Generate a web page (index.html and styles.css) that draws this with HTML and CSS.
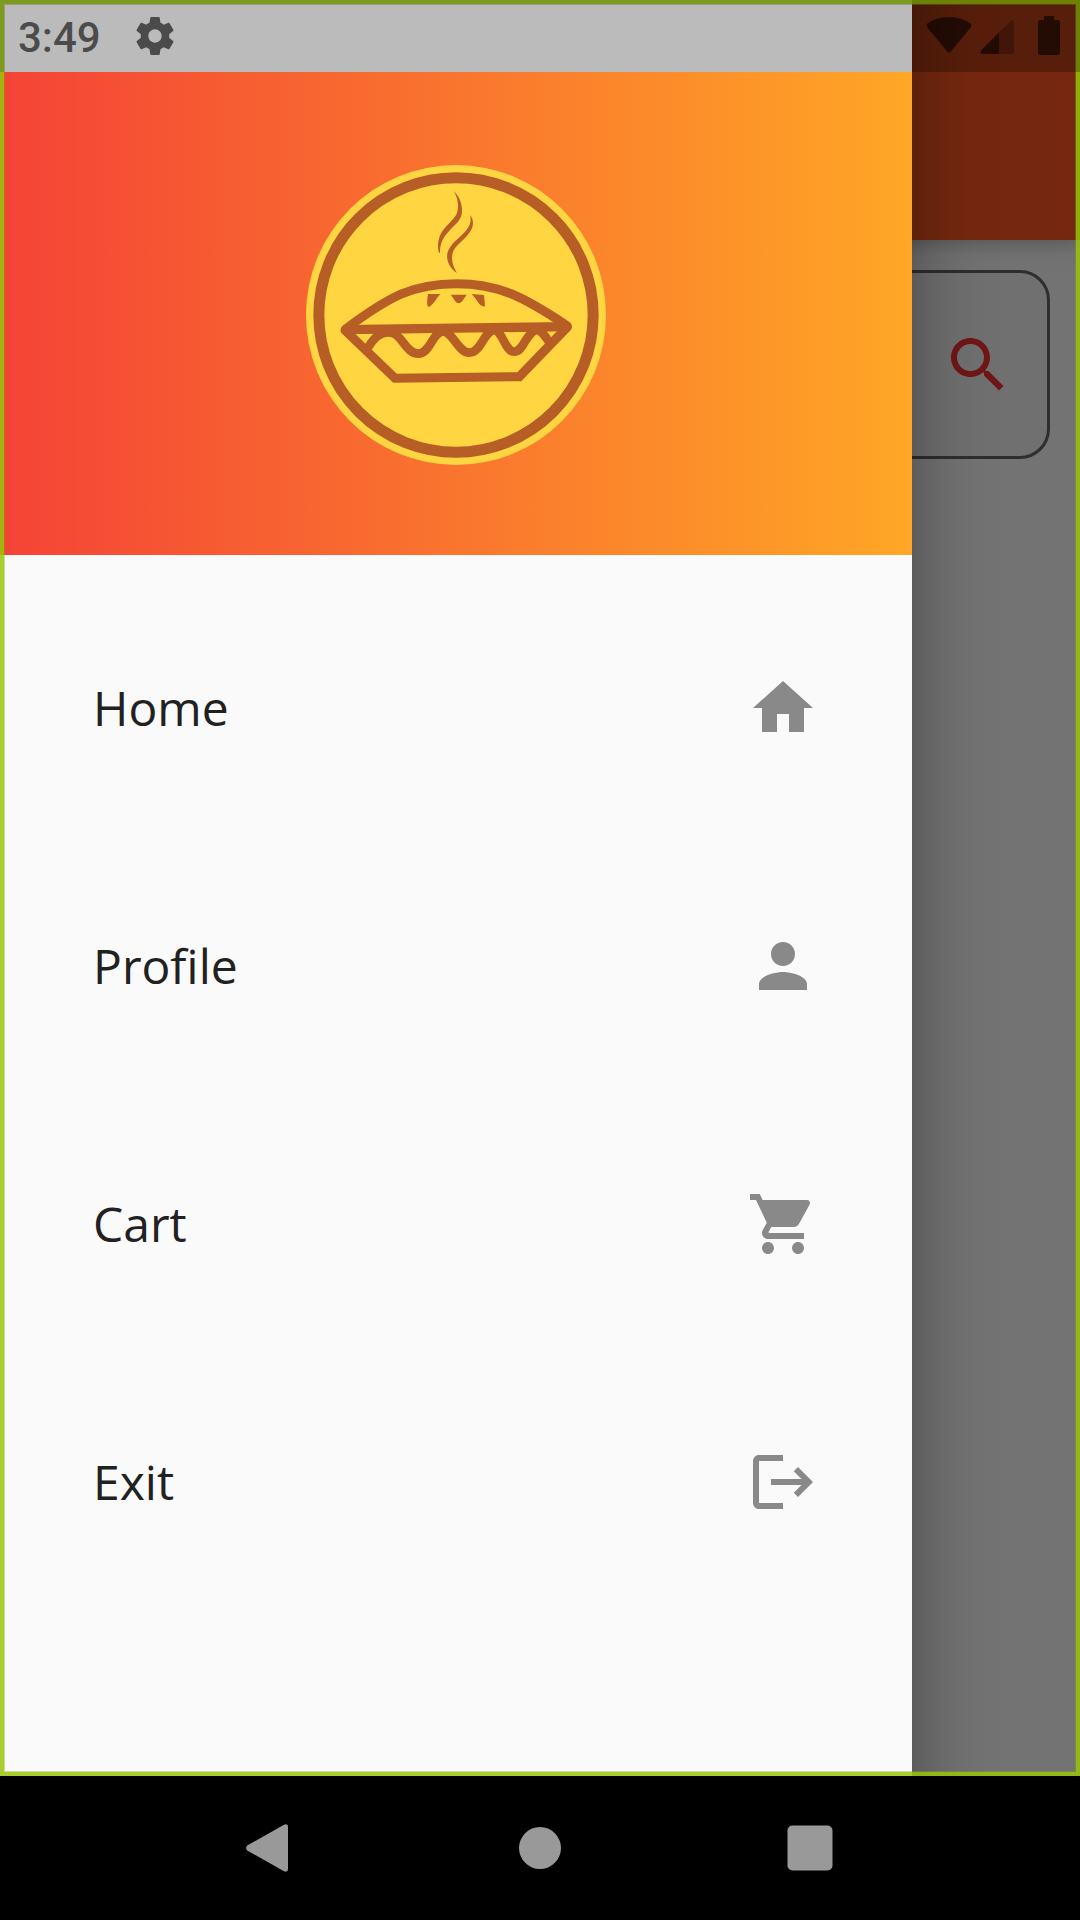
FILE: index.html
```
<!DOCTYPE html>
<html lang="en">
<head>
<meta charset="utf-8">
<title>Menu</title>
<link rel="stylesheet" href="styles.css">
</head>
<body>
<div class="phone">
  <div class="stage">
    <main class="page">
      <header class="app-bar"></header>
      <div class="search-field">
        <svg class="search-icon" viewBox="0 0 24 24"><path d="M15.5 14h-.79l-.28-.27C15.41 12.59 16 11.11 16 9.5 16 5.91 13.09 3 9.5 3S3 5.91 3 9.5 5.91 16 9.5 16c1.61 0 3.09-.59 4.23-1.57l.27.28v.79l5 4.99L20.49 19l-4.99-5zm-6 0C7.01 14 5 11.99 5 9.5S7.01 5 9.5 5 14 7.01 14 9.5 11.99 14 9.5 14z"/></svg>
      </div>
    </main>
    <div class="scrim"></div>
    <aside class="drawer">
      <div class="drawer-header">
        <svg class="logo" viewBox="48 45 900 900">
          <circle class="logo-disc" cx="498" cy="495" r="450"/>
          <circle class="logo-line" cx="498" cy="495" r="411.5" stroke-width="33"/>
          <path class="logo-fill" d="M491 123C507 139 517 158 516 187C514 210 497 223 478 242C459 262 450 279 450 308L447 308C441 288 444 262 458 242C473 222 494 207 501 189C508 168 503 142 491 123Z"/>
          <path class="logo-fill" d="M541 195C551 209 551 226 543 241C531 263 510 276 497 292C480 313 484 344 501 369C481 356 468 335 472 310C478 281 513 261 530 239C543 223 543 210 541 195Z"/>
          <path class="logo-line" stroke-width="27" d="M167 537C300 438 370 401 500 401C625 401 700 440 831 527"/>
          <path class="logo-line" stroke-width="28" d="M167 539L831 530"/>
          <path class="logo-line logo-miter" stroke-width="27" d="M165 541L315 685L688 680L832 531"/>
          <path class="logo-line" stroke-width="26" d="M236 590C258 552 284 542 308 549C336 556 349 611 385 611C420 611 425 551 458 543C490 547 504 608 538 608C574 608 580 546 612 540C638 542 645 605 672 605C701 605 705 553 738 539C754 540 763 556 774 571"/>
          <path class="logo-fill" d="M414 432L451 432C438 445 432 464 416 471C409 466 412 446 414 432ZM482 434L530 434C522 445 516 459 506 460C496 459 491 444 482 434ZM545 432L582 435L585 469C568 472 563 450 545 432Z"/>
        </svg>
      </div>
      <nav class="menu">
        <a class="menu-item"><span class="menu-label">Home</span>
          <svg class="menu-icon" viewBox="0 0 24 24"><path d="M10 20v-6h4v6h5v-8h3L12 3 2 12h3v8z"/></svg></a>
        <a class="menu-item"><span class="menu-label">Profile</span>
          <svg class="menu-icon" viewBox="0 0 24 24"><path d="M12 12c2.21 0 4-1.79 4-4s-1.79-4-4-4-4 1.79-4 4 1.790 4 4 4zm0 2c-2.670 0-8 1.340-8 4v2h16v-2c0-2.660-5.330-4-8-4z"/></svg></a>
        <a class="menu-item"><span class="menu-label">Cart</span>
          <svg class="menu-icon" viewBox="0 0 24 24"><path d="M7 18c-1.100 0-1.990.9-1.990 2S5.900 22 7 22s2-.9 2-2-.9-2-2-2zM1 2v2h2l3.600 7.590-1.350 2.450c-.16.28-.25.61-.25.96 0 1.100.9 2 2 2h12v-2H7.420c-.14 0-.25-.11-.25-.25l.03-.12.9-1.630h7.450c.75 0 1.410-.41 1.750-1.030l3.580-6.490c.08-.14.12-.31.12-.48 0-.55-.45-1-1-1H5.210l-.94-2H1zm16 16c-1.100 0-1.990.9-1.990 2s.89 2 1.990 2 2-.9 2-2-.9-2-2-2z"/></svg></a>
        <a class="menu-item"><span class="menu-label">Exit</span>
          <svg class="menu-icon" viewBox="0 0 24 24"><path d="M17 7l-1.410 1.410L18.170 11H8v2h10.170l-2.580 2.580L17 17l5-5zM4 5h8V3H4c-1.100 0-2 .9-2 2v14c0 1.100.9 2 2 2h8v-2H4V5z"/></svg></a>
      </nav>
    </aside>
    <div class="focus-frame"></div>
    <div class="status-bar">
      <span class="clock">3:49</span>
      <svg class="gear" viewBox="2 2 20 20"><path d="M19.430 12.980c.04-.32.07-.64.07-.98s-.03-.66-.07-.98l2.110-1.650c.19-.15.24-.42.12-.64l-2-3.460c-.12-.22-.39-.3-.61-.22l-2.490 1c-.52-.4-1.080-.73-1.690-.98l-.38-2.650C14.460 2.180 14.250 2 14 2h-4c-.25 0-.46.18-.49.42l-.38 2.650c-.61.25-1.170.59-1.690.98l-2.490-1c-.23-.09-.49 0-.61.22l-2 3.460c-.13.22-.07.49.12.64l2.110 1.650c-.04.32-.07.65-.07.98s.03.66.07.98l-2.110 1.650c-.19.15-.24.42-.12.64l2 3.460c.12.22.39.3.61.22l2.490-1c.52.4 1.080.73 1.690.98l.38 2.650c.03.24.24.42.49.42h4c.25 0 .46-.18.49-.42l.38-2.650c.61-.25 1.170-.59 1.690-.98l2.490 1c.23.09.49 0 .61-.22l2-3.460c.12-.22.07-.49-.12-.64l-2.110-1.650zM12 15.500c-1.930 0-3.500-1.570-3.500-3.500s1.570-3.500 3.500-3.500 3.500 1.570 3.500 3.500-1.570 3.500-3.500 3.500z"/></svg>
      <svg class="signals" viewBox="0 0 136 40">
        <path d="M.6 8Q10 1 23 1Q36 1 45.400 8L45 11L24.500 36Q23 37.600 21.500 36L1 11Z"/>
        <path d="M73 16.500V38H56.500Q53 37 55 34.500Z"/>
        <path class="signal-empty" d="M73 16.500L85 4.500Q88 3 88 6V36Q88 38 86 38H73Z"/>
        <path d="M118 0H128V4H132Q134 4 134 6V37Q134 39 132 39H114Q112 39 112 37V6Q112 4 114 4H118Z"/>
      </svg>
    </div>
  </div>
  <footer class="nav-bar">
    <svg class="nav-icon" viewBox="0 0 48 48"><path d="M1.200 21.500L38 .7Q42 -.8 42 3V45Q42 48.800 38 47.300L1.200 26.500Q-1 24 1.200 21.500Z"/></svg>
    <svg class="nav-icon" viewBox="0 0 48 48"><circle cx="24" cy="24" r="21"/></svg>
    <svg class="nav-icon" viewBox="0 0 48 48"><rect x="1.500" y="1.500" width="45" height="45" rx="5"/></svg>
  </footer>
</div>
</body>
</html>
```

FILE: styles.css
```
* { box-sizing: border-box; }
body { margin: 0; background: #000; }
svg { display: block; flex: none; }

.phone { width: 1080px; height: 1920px; display: flex; flex-direction: column; overflow: hidden; }
.stage { position: relative; height: 1776px; overflow: hidden; }

/* screen behind the drawer */
.page { height: 100%; background: #fafafa; }
.app-bar { height: 240px; background: #ff5722; box-shadow: 0 6px 12px rgba(0, 0, 0, .12), 0 3px 30px rgba(0, 0, 0, .12); }
.search-field { margin: 30px 30px 0; height: 189px; padding: 0 33px; display: flex; align-items: center; justify-content: flex-end; background: #f4f4f4; border: 3px solid #646464; border-radius: 30px; }
.search-icon { width: 72px; height: 72px; fill: #f73034; }
.scrim { position: absolute; inset: 0; background: rgba(0, 0, 0, .54); }

/* drawer: runs past both ends of the stage so its shadow stays even */
.drawer { position: absolute; top: -80px; bottom: -80px; left: 0; width: 912px; padding-top: 152px; background: #fafafa; box-shadow: 0 0 72px rgba(0, 0, 0, .38); }
.drawer-header { height: 483px; padding-top: 93px; display: flex; justify-content: center; align-items: flex-start; background: linear-gradient(90deg, #f44336, #ffa726); }
.logo { width: 300px; height: 300px; }
.logo-disc { fill: #ffd541; }
.logo-fill { fill: #b65e25; }
.logo-line { fill: none; stroke: #b65e25; stroke-linecap: round; stroke-linejoin: round; }
.logo-miter { stroke-linejoin: miter; }
.menu { padding: 24px 93px; }
.menu-item { height: 258px; display: flex; align-items: center; justify-content: space-between; }
.menu-label { font: 400 48px/66px "Open Sans", sans-serif; color: #212121; }
.menu-icon { width: 72px; height: 72px; fill: #898989; }

.focus-frame { position: absolute; inset: 0; border: 4px solid rgba(152, 198, 8, .85); box-shadow: inset 0 0 0 1px rgba(130, 170, 8, .4); }

/* system bars */
.status-bar { position: absolute; top: 0; left: 0; right: 0; height: 72px; padding: 16px 18px 0 18px; display: flex; align-items: flex-start; background: rgba(0, 0, 0, .25); color: rgba(0, 0, 0, .6); fill: rgba(0, 0, 0, .6); }
.clock { width: 118px; margin-top: 1px; font: 500 42px/42px Roboto, sans-serif; }
.gear { width: 38px; height: 38px; margin-top: 1px; }
.signals { width: 136px; height: 40px; margin-left: auto; }
.signal-empty { fill: rgba(0, 0, 0, .25); }
.nav-bar { height: 144px; padding: 0 246px; display: flex; align-items: center; justify-content: space-between; background: #000; }
.nav-icon { width: 48px; height: 48px; fill: #999; }
```
